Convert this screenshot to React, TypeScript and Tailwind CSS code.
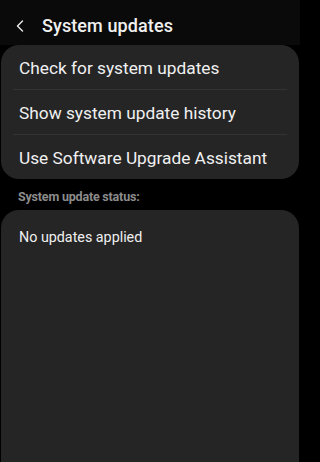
import { ChevronLeft } from "lucide-react";

const actions = [
  "Check for system updates",
  "Show system update history",
  "Use Software Upgrade Assistant",
];

export default function App() {
  return (
    <div className="w-full h-screen bg-black">
      <div className="w-[300px] h-full bg-black flex flex-col overflow-hidden font-['Roboto',sans-serif] text-[#f0f0f0]">
        {/* Top bar */}
        <div className="h-[45px] shrink-0 bg-[#0a0a0a] flex items-center pt-[6px]">
          <ChevronLeft className="ml-[10px] w-5 h-5 text-[#e8e8e8]" strokeWidth={1.7} />
          <span className="ml-[12px] text-[18px] font-medium tracking-[0.1px]">System updates</span>
        </div>

        {/* Actions card */}
        <div className="bg-[#252525] rounded-[18px] mx-px">
          {actions.map((label, i) => (
            <div key={label}>
              {i > 0 && <div className="mx-3 h-px bg-[#333333]" />}
              <div className="h-[44px] flex items-center px-[18px] pt-[3px] text-[17.3px]">{label}</div>
            </div>
          ))}
        </div>

        {/* Status */}
        <div className="h-[31px] shrink-0 flex items-center pt-[6px] px-[18px] text-[12.5px] font-bold text-[#8c8c8c] tracking-[-0.2px]">
          System update status:
        </div>
        <div className="flex-1 bg-[#252525] rounded-t-[18px] mx-px pt-[17px] px-[18px]">
          <div className="text-[14.3px]">No updates applied</div>
        </div>
      </div>
    </div>
  );
}
